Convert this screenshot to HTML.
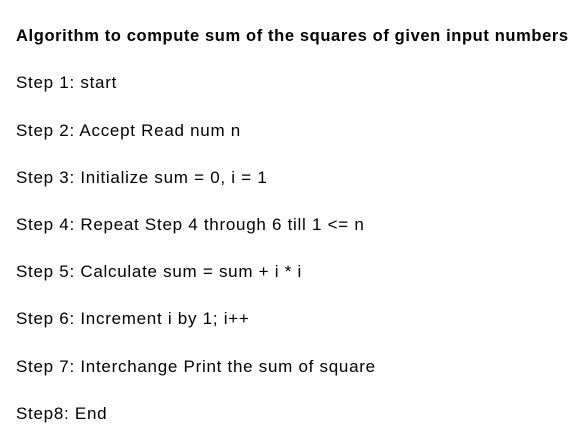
<!DOCTYPE html>
<html><head><meta charset="utf-8"><style>
html,body{margin:0;padding:0;background:#fff;}
body{width:585px;height:446px;position:relative;overflow:hidden;font-family:"Liberation Sans",sans-serif;color:#000;font-size:17px;letter-spacing:0.72px;}
.l{position:absolute;left:16px;white-space:nowrap;line-height:20px;}
.b{font-weight:bold;font-size:16.5px;letter-spacing:0.62px;}
</style></head><body>
<div class="l b" style="top:26px">Algorithm to compute sum of the squares of given input numbers</div>
<div class="l" style="top:73px">Step 1: start</div>
<div class="l" style="top:121px">Step 2: Accept Read num n</div>
<div class="l" style="top:168px">Step 3: Initialize sum = 0, i = 1</div>
<div class="l" style="top:215px">Step 4: Repeat Step 4 through 6 till 1 &lt;= n</div>
<div class="l" style="top:262px">Step 5: Calculate sum = sum + i * i</div>
<div class="l" style="top:309px">Step 6: Increment i by 1; i++</div>
<div class="l" style="top:357px">Step 7: Interchange Print the sum of square</div>
<div class="l" style="top:404px">Step8: End</div>
</body></html>
